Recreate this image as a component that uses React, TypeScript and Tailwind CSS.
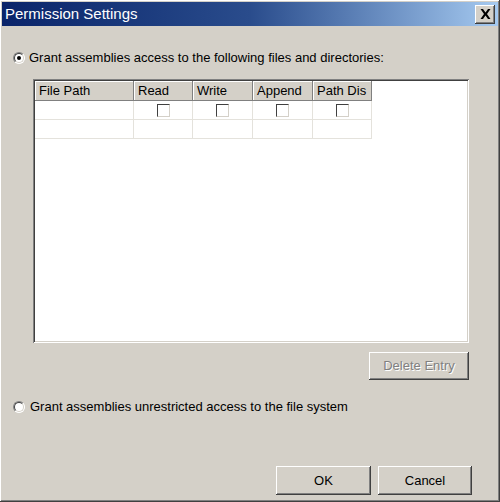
import React from 'react';

const raised =
  'shadow-[inset_-1px_-1px_0_#404040,inset_1px_1px_0_#ffffff,inset_-2px_-2px_0_#808080,inset_2px_2px_0_#d4d0c8]';
const sunken =
  'shadow-[inset_1px_1px_0_#808080,inset_-1px_-1px_0_#ffffff,inset_2px_2px_0_#404040,inset_-2px_-2px_0_#d4d0c8]';

const Radio = ({ checked }: { checked?: boolean }) => (
  <span className="relative w-[12px] h-[12px] rounded-full bg-white border border-t-[#808080] border-l-[#808080] border-b-white border-r-white shrink-0 flex items-center justify-center">
    <span className="absolute inset-0 rounded-full border border-t-[#404040] border-l-[#404040] border-b-[#d4d0c8] border-r-[#d4d0c8]" />
    {checked && <span className="w-[4px] h-[4px] rounded-full bg-black" />}
  </span>
);

const Check = () => (
  <span className="block w-[13px] h-[13px] bg-white border border-t-[#404040] border-l-[#404040] border-b-[#d4d0c8] border-r-[#d4d0c8]" />
);

const columns = [
  { label: 'File Path', w: 'w-[99px]', check: false },
  { label: 'Read', w: 'w-[59px]', check: true },
  { label: 'Write', w: 'w-[60px]', check: true },
  { label: 'Append', w: 'w-[60px]', check: true },
  { label: 'Path Dis', w: 'w-[59px]', check: true },
];

export default function App() {
  return (
    <div
      className={`w-[500px] h-[502px] bg-[#d4d0c8] p-[2px] flex flex-col text-[13px] text-black ${raised}`}
      style={{ fontFamily: '"Liberation Sans", Arial, sans-serif' }}
    >
      {/* title bar */}
      <div className="h-[24px] flex items-center justify-between pl-[3px] pr-[3px] bg-gradient-to-r from-[#0a246a] via-[#2a4c8c] to-[#a6caf0]">
        <span className="text-white text-[15px]">Permission Settings</span>
        <button className={`w-[20px] h-[19px] bg-[#d4d0c8] flex items-center justify-center ${raised}`}>
          <svg width="11" height="10" viewBox="0 0 11 10">
            <path d="M0.5 0h2.5l2.5 3.4L8 0h2.5L7 5l3.5 5H8L5.5 6.6 3 10H0.5L4 5z" fill="#000" />
          </svg>
        </button>
      </div>

      <div className="flex flex-col pl-[11px] pr-[29px]">
        <label className="mt-[24px] flex items-center gap-[4px] h-[16px]">
          <Radio checked />
          <span>Grant assemblies access to the following files and directories:</span>
        </label>

        <div className={`ml-[20px] mt-[13px] h-[264px] bg-white p-[2px] ${sunken}`}>
          <div className="flex h-[20px] w-fit">
            {columns.map((c) => (
              <div
                key={c.label}
                className={`${c.w} h-[20px] bg-[#d4d0c8] pl-[4px] flex items-center whitespace-nowrap overflow-hidden border-r border-b border-[#808080] shadow-[inset_1px_1px_0_#ffffff]`}
              >
                {c.label}
              </div>
            ))}
          </div>
          {[0, 1].map((r) => (
            <div key={r} className="flex h-[19px] w-fit">
              {columns.map((c) => (
                <div
                  key={c.label}
                  className={`${c.w} h-[19px] border-r border-b border-[#e4e2dc] flex items-center justify-center`}
                >
                  {r === 0 && c.check && <Check />}
                </div>
              ))}
            </div>
          ))}
        </div>

        <div className="flex justify-end mt-[9px]">
          <button
            className={`w-[100px] h-[28px] flex items-center justify-center text-[#808080] [text-shadow:1px_1px_0_#ffffff] ${raised}`}
          >
            Delete Entry
          </button>
        </div>

        <label className="mt-[19px] flex items-center gap-[5px] h-[16px]">
          <Radio />
          <span>Grant assemblies unrestricted access to the file system</span>
        </label>
      </div>

      <div className="mt-auto mb-[5px] flex justify-end gap-[7px] pr-[26px]">
        <button className={`w-[95px] h-[29px] flex items-center justify-center ${raised}`}>OK</button>
        <button className={`w-[94px] h-[29px] flex items-center justify-center ${raised}`}>Cancel</button>
      </div>
    </div>
  );
}
